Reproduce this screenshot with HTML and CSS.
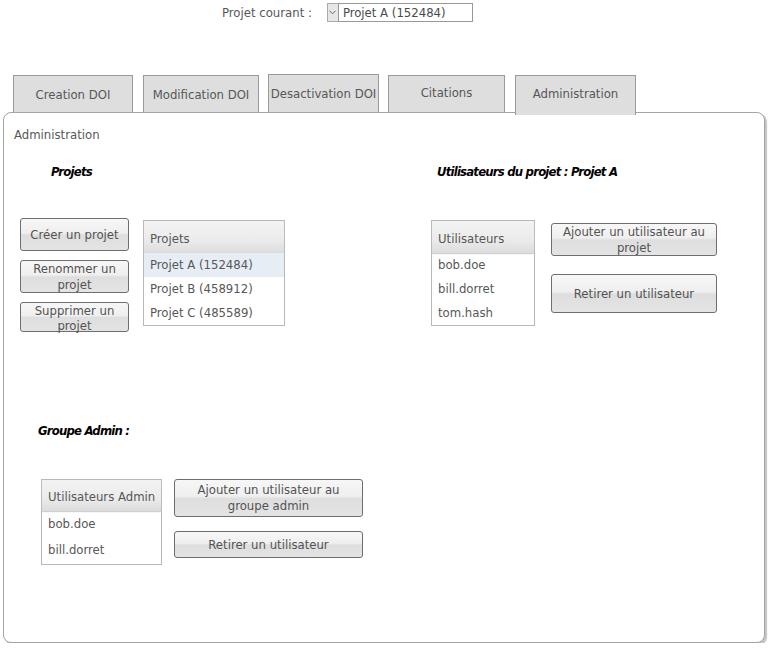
FILE: index.html
```html
<!DOCTYPE html>
<html lang="fr">
<head>
<meta charset="utf-8">
<title>Administration</title>
<link rel="stylesheet" href="styles.css">
</head>
<body>
<div class="topbar">
  <span class="top-label">Projet courant :</span>
  <div class="select">
    <span class="select-arrow"><svg width="7" height="5" viewBox="0 0 7 5"><path d="M0.5 0.8 L3.5 3.8 L6.5 0.8" fill="none" stroke="#666" stroke-width="1"/></svg></span>
    <span class="select-value">Projet A (152484)</span>
  </div>
</div>
<div class="tabs">
  <div class="tab tab-creation">Creation DOI</div>
  <div class="tab tab-modif">Modification DOI</div>
  <div class="tab tab-desact">Desactivation DOI</div>
  <div class="tab tab-cit">Citations</div>
  <div class="tab tab-admin">Administration</div>
</div>
<div class="panel">
  <div class="panel-title">Administration</div>
  <div class="proj-row">
    <section class="proj-left">
      <h2 class="heading heading-projets">Projets</h2>
      <div class="block-body">
        <div class="btn-col btn-col-left">
          <button class="btn btn-create">Créer un projet</button>
          <button class="btn btn-rename">Renommer un projet</button>
          <button class="btn btn-delete">Supprimer un projet</button>
        </div>
        <div class="list list-projets">
          <div class="list-head">Projets</div>
          <div class="list-row selected">Projet A (152484)</div>
          <div class="list-row">Projet B (458912)</div>
          <div class="list-row">Projet C (485589)</div>
        </div>
      </div>
    </section>
    <section class="proj-right">
      <h2 class="heading heading-users">Utilisateurs du projet : Projet A</h2>
      <div class="block-body">
        <div class="list list-users">
          <div class="list-head">Utilisateurs</div>
          <div class="list-row">bob.doe</div>
          <div class="list-row">bill.dorret</div>
          <div class="list-row">tom.hash</div>
        </div>
        <div class="btn-col btn-col-users">
          <button class="btn btn-add-user">Ajouter un utilisateur au projet</button>
          <button class="btn btn-remove-user">Retirer un utilisateur</button>
        </div>
      </div>
    </section>
  </div>
  <section class="admin">
    <h2 class="heading heading-admin">Groupe Admin :</h2>
    <div class="block-body">
      <div class="list list-admin">
        <div class="list-head">Utilisateurs Admin</div>
        <div class="list-row">bob.doe</div>
        <div class="list-row">bill.dorret</div>
      </div>
      <div class="btn-col btn-col-admin">
        <button class="btn btn-add-admin">Ajouter un utilisateur au groupe admin</button>
        <button class="btn btn-remove-admin">Retirer un utilisateur</button>
      </div>
    </div>
  </section>
</div>
</body>
</html>
```
FILE: styles.css
```css
* { box-sizing: border-box; }
body {
  margin: 0;
  background: #fff;
  font-family: "DejaVu Sans Condensed", "DejaVu Sans", sans-serif;
  font-size: 13px;
  line-height: 16px;
  color: #575757;
}
.topbar {
  height: 25px;
  padding: 3px 0 0 222px;
  display: flex;
  align-items: center;
}
.top-label { margin-right: 15px; margin-top: -3px; }
.select {
  display: flex;
  height: 19px;
  align-self: flex-start;
}
.select-arrow {
  width: 11px;
  height: 19px;
  background: #e6e6e6;
  border: 1px solid #aaa;
  border-right: none;
  display: flex;
  align-items: center;
  justify-content: center;
}
.select-value {
  width: 135px;
  height: 19px;
  border: 1px solid #999;
  padding: 0 0 0 4px;
  line-height: 17px;
  color: #4a4a4a;
}
.tabs {
  margin-top: 50px;
  height: 37px;
  display: flex;
  align-items: flex-end;
}
.tab {
  height: 37px;
  background: #dedede;
  border: 1px solid #9a9a9a;
  border-bottom: none;
  display: flex;
  align-items: center;
  justify-content: center;
  white-space: nowrap;
  padding-top: 2px;
}
.tab-creation { width: 120px; margin-left: 13px; }
.tab-modif { width: 116px; margin-left: 10px; }
.tab-desact { width: 111px; margin-left: 9px; height: 38px; padding-top: 0; }
.tab-cit { width: 117px; margin-left: 9px; padding-top: 0; padding-bottom: 2px; }
.tab-admin {
  width: 121px;
  margin-left: 10px;
  height: 40px;
  margin-bottom: -3px;
  padding-top: 0;
  padding-bottom: 3px;
  position: relative;
  z-index: 1;
}
.panel {
  margin-left: 3px;
  width: 762px;
  height: 531px;
  border: 1px solid #a3a3a3;
  border-radius: 8px;
  box-shadow: 2px 2px 1px #c4c4c4;
  background: #fff;
}
.panel-title { margin: 14px 0 0 10px; }
.heading {
  margin: 0;
  font-size: 13px;
  line-height: 16px;
  font-weight: bold;
  font-style: italic;
  color: #000;
  letter-spacing: -0.8px;
}
.proj-row {
  display: flex;
  margin-top: 21px;
}
.proj-left { margin-left: 16px; width: 411px; }
.heading-projets { padding-left: 31px; }
.heading-users { padding-left: 6px; }
.block-body { display: flex; align-items: flex-start; }
.proj-left .block-body, .proj-right .block-body { margin-top: 38px; }
.btn-col { display: flex; flex-direction: column; }
.btn {
  font: inherit;
  color: #535353;
  border: 1px solid #6e6e6e;
  border-radius: 3px;
  background: linear-gradient(to bottom, #f7f7f7 0%, #efefef 45%, #dedede 52%, #e4e4e4 100%);
  padding: 0 4px;
  line-height: 16px;
  text-align: center;
  cursor: default;
}
.btn-col-left { width: 109px; gap: 9px; }
.btn-create { height: 33px; }
.btn-rename { height: 33px; }
.btn-delete { height: 30px; line-height: 15px; }
.list {
  border: 1px solid #b8b8b8;
  background: #fff;
}
.list-head {
  height: 32px;
  padding-left: 6px;
  display: flex;
  align-items: center;
  background: linear-gradient(to bottom, #f3f3f3 0%, #ebebeb 60%, #dcdcdc 100%);
  box-shadow: 0 1px 1px #cfcfcf;
  padding-top: 3px;
}
.list-row {
  height: 24px;
  line-height: 24px;
  padding-left: 6px;
  white-space: nowrap;
}
.list-row.selected { background: #e7edf5; }
.list-projets { width: 142px; height: 106px; margin-top: 2px; margin-left: 14px; }
.list-users { width: 104px; height: 106px; margin-top: 2px; }
.btn-col-users { width: 166px; margin-left: 16px; margin-top: 5px; gap: 18px; }
.btn-add-user { height: 33px; }
.btn-remove-user { height: 39px; }
.admin { margin-top: 91px; margin-left: 34px; }
.admin .block-body { margin-top: 40px; }
.list-admin { width: 121px; height: 86px; margin-left: 3px; }
.list-admin .list-head { height: 31px; }
.list-admin .list-row { height: 26px; line-height: 26px; }
.btn-col-admin { width: 189px; margin-left: 12px; gap: 14px; }
.btn-add-admin { height: 38px; }
.btn-remove-admin { height: 27px; }
```
